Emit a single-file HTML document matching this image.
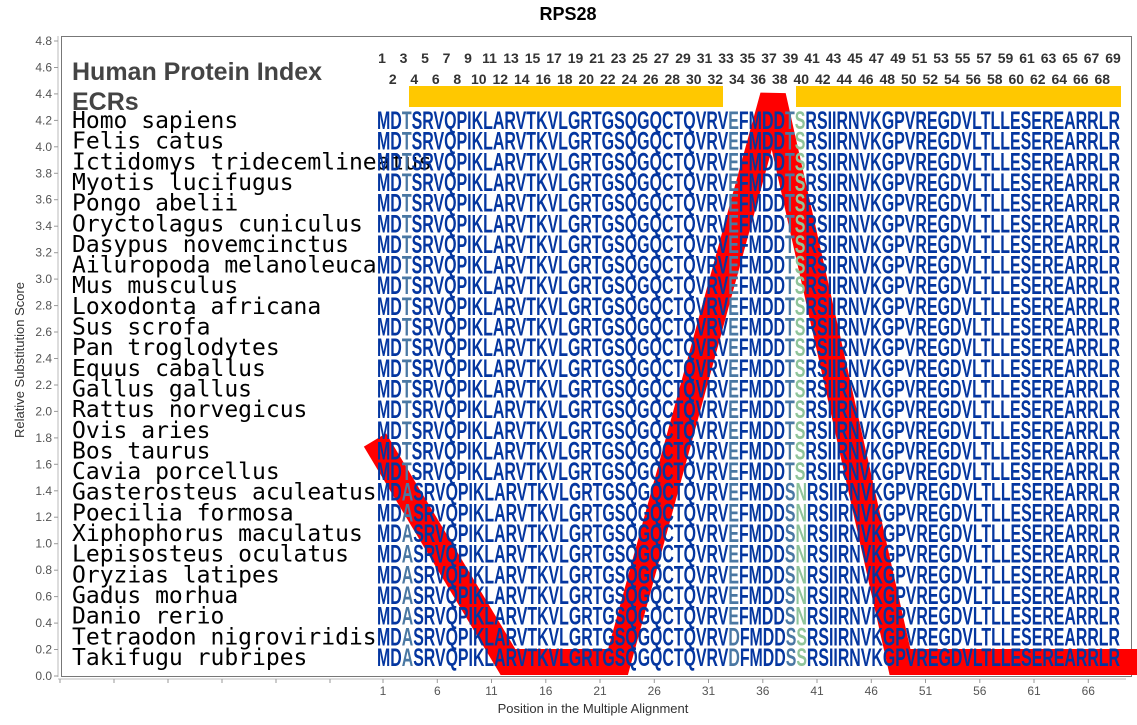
<!DOCTYPE html>
<html><head><meta charset="utf-8"><style>
html,body{margin:0;padding:0;background:#fff;width:1137px;height:725px;overflow:hidden}
svg{display:block}
.sp{font-family:"DejaVu Sans Mono","Liberation Mono",monospace;font-size:23px;fill:#000}
.sq{font-family:"Liberation Sans",sans-serif;font-size:25px;font-weight:bold;fill:#0436a0}
.s{fill:#4a78a3}.g{fill:#8fc49a}
.hn{font-family:"Liberation Sans",sans-serif;font-size:14px;font-weight:bold;fill:#333;text-anchor:middle}
.yl{font-family:"Liberation Sans","DejaVu Sans",sans-serif;font-size:12px;fill:#555;text-anchor:end}
.xl{font-family:"Liberation Sans","DejaVu Sans",sans-serif;font-size:12px;fill:#555;text-anchor:middle}
</style></head><body>
<svg width="1137" height="725" viewBox="0 0 1137 725" xmlns="http://www.w3.org/2000/svg">
<text x="568" y="20" text-anchor="middle" font-family="Liberation Sans,sans-serif" font-weight="bold" font-size="18" fill="#000">RPS28</text>
<text transform="translate(24,360) rotate(-90)" text-anchor="middle" font-family="Liberation Sans,sans-serif" font-size="13" fill="#333">Relative Substitution Score</text>
<text x="593" y="713" text-anchor="middle" font-family="Liberation Sans,sans-serif" font-size="13" fill="#333">Position in the Multiple Alignment</text>
<line x1="58" y1="36" x2="58" y2="677" stroke="#bbb"/>
<rect x="61.5" y="36.5" width="1070" height="640" fill="none" stroke="#777"/>
<line x1="58" y1="679" x2="1126" y2="679" stroke="#bbb"/>
<g stroke="#999">
<line x1="54" y1="41" x2="58" y2="41"/><line x1="54" y1="67.5" x2="58" y2="67.5"/><line x1="54" y1="93.9" x2="58" y2="93.9"/><line x1="54" y1="120.4" x2="58" y2="120.4"/><line x1="54" y1="146.8" x2="58" y2="146.8"/><line x1="54" y1="173.3" x2="58" y2="173.3"/><line x1="54" y1="199.7" x2="58" y2="199.7"/><line x1="54" y1="226.2" x2="58" y2="226.2"/><line x1="54" y1="252.7" x2="58" y2="252.7"/><line x1="54" y1="279.1" x2="58" y2="279.1"/><line x1="54" y1="305.6" x2="58" y2="305.6"/><line x1="54" y1="332" x2="58" y2="332"/><line x1="54" y1="358.5" x2="58" y2="358.5"/><line x1="54" y1="385" x2="58" y2="385"/><line x1="54" y1="411.4" x2="58" y2="411.4"/><line x1="54" y1="437.9" x2="58" y2="437.9"/><line x1="54" y1="464.3" x2="58" y2="464.3"/><line x1="54" y1="490.8" x2="58" y2="490.8"/><line x1="54" y1="517.2" x2="58" y2="517.2"/><line x1="54" y1="543.7" x2="58" y2="543.7"/><line x1="54" y1="570.2" x2="58" y2="570.2"/><line x1="54" y1="596.6" x2="58" y2="596.6"/><line x1="54" y1="623.1" x2="58" y2="623.1"/><line x1="54" y1="649.5" x2="58" y2="649.5"/><line x1="54" y1="676" x2="58" y2="676"/>
<line x1="60" y1="679" x2="60" y2="683"/><line x1="114" y1="679" x2="114" y2="683"/><line x1="168" y1="679" x2="168" y2="683"/><line x1="222" y1="679" x2="222" y2="683"/><line x1="276" y1="679" x2="276" y2="683"/><line x1="330" y1="679" x2="330" y2="683"/><line x1="383" y1="679" x2="383" y2="683"/><line x1="437.3" y1="679" x2="437.3" y2="683"/><line x1="491.5" y1="679" x2="491.5" y2="683"/><line x1="545.8" y1="679" x2="545.8" y2="683"/><line x1="600" y1="679" x2="600" y2="683"/><line x1="654.3" y1="679" x2="654.3" y2="683"/><line x1="708.5" y1="679" x2="708.5" y2="683"/><line x1="762.8" y1="679" x2="762.8" y2="683"/><line x1="817" y1="679" x2="817" y2="683"/><line x1="871.3" y1="679" x2="871.3" y2="683"/><line x1="925.5" y1="679" x2="925.5" y2="683"/><line x1="979.8" y1="679" x2="979.8" y2="683"/><line x1="1034" y1="679" x2="1034" y2="683"/><line x1="1088.3" y1="679" x2="1088.3" y2="683"/>
</g>
<g class="yl">
<text x="52" y="45">4.8</text><text x="52" y="71.5">4.6</text><text x="52" y="97.9">4.4</text><text x="52" y="124.4">4.2</text><text x="52" y="150.8">4.0</text><text x="52" y="177.3">3.8</text><text x="52" y="203.7">3.6</text><text x="52" y="230.2">3.4</text><text x="52" y="256.7">3.2</text><text x="52" y="283.1">3.0</text><text x="52" y="309.6">2.8</text><text x="52" y="336">2.6</text><text x="52" y="362.5">2.4</text><text x="52" y="389">2.2</text><text x="52" y="415.4">2.0</text><text x="52" y="441.9">1.8</text><text x="52" y="468.3">1.6</text><text x="52" y="494.8">1.4</text><text x="52" y="521.2">1.2</text><text x="52" y="547.7">1.0</text><text x="52" y="574.2">0.8</text><text x="52" y="600.6">0.6</text><text x="52" y="627.1">0.4</text><text x="52" y="653.5">0.2</text><text x="52" y="680">0.0</text>
</g>
<g class="xl">
<text x="383" y="695">1</text><text x="437.3" y="695">6</text><text x="491.5" y="695">11</text><text x="545.8" y="695">16</text><text x="600" y="695">21</text><text x="654.3" y="695">26</text><text x="708.5" y="695">31</text><text x="762.8" y="695">36</text><text x="817" y="695">41</text><text x="871.3" y="695">46</text><text x="925.5" y="695">51</text><text x="979.8" y="695">56</text><text x="1034" y="695">61</text><text x="1088.3" y="695">66</text>
</g>
<text x="72" y="80" font-family="Liberation Sans,sans-serif" font-weight="bold" font-size="25" fill="#444">Human Protein Index</text>
<text x="72" y="110" font-family="Liberation Sans,sans-serif" font-weight="bold" font-size="25" fill="#444">ECRs</text>
<g class="hn">
<text x="382" y="63">1</text><text x="403.5" y="63">3</text><text x="425" y="63">5</text><text x="446.5" y="63">7</text><text x="468" y="63">9</text><text x="489.5" y="63">11</text><text x="511" y="63">13</text><text x="532.5" y="63">15</text><text x="554" y="63">17</text><text x="575.5" y="63">19</text><text x="597" y="63">21</text><text x="618.5" y="63">23</text><text x="640" y="63">25</text><text x="661.5" y="63">27</text><text x="683" y="63">29</text><text x="704.5" y="63">31</text><text x="726" y="63">33</text><text x="747.5" y="63">35</text><text x="769" y="63">37</text><text x="790.5" y="63">39</text><text x="812" y="63">41</text><text x="833.5" y="63">43</text><text x="855" y="63">45</text><text x="876.5" y="63">47</text><text x="898" y="63">49</text><text x="919.5" y="63">51</text><text x="941" y="63">53</text><text x="962.5" y="63">55</text><text x="984" y="63">57</text><text x="1005.5" y="63">59</text><text x="1027" y="63">61</text><text x="1048.5" y="63">63</text><text x="1070" y="63">65</text><text x="1091.5" y="63">67</text><text x="1113" y="63">69</text>
<text x="392.75" y="84">2</text><text x="414.25" y="84">4</text><text x="435.75" y="84">6</text><text x="457.25" y="84">8</text><text x="478.75" y="84">10</text><text x="500.25" y="84">12</text><text x="521.75" y="84">14</text><text x="543.25" y="84">16</text><text x="564.75" y="84">18</text><text x="586.25" y="84">20</text><text x="607.75" y="84">22</text><text x="629.25" y="84">24</text><text x="650.75" y="84">26</text><text x="672.25" y="84">28</text><text x="693.75" y="84">30</text><text x="715.25" y="84">32</text><text x="736.75" y="84">34</text><text x="758.25" y="84">36</text><text x="779.75" y="84">38</text><text x="801.25" y="84">40</text><text x="822.75" y="84">42</text><text x="844.25" y="84">44</text><text x="865.75" y="84">46</text><text x="887.25" y="84">48</text><text x="908.75" y="84">50</text><text x="930.25" y="84">52</text><text x="951.75" y="84">54</text><text x="973.25" y="84">56</text><text x="994.75" y="84">58</text><text x="1016.25" y="84">60</text><text x="1037.75" y="84">62</text><text x="1059.25" y="84">64</text><text x="1080.75" y="84">66</text><text x="1102.25" y="84">68</text>
</g>
<rect x="409" y="86" width="314" height="21" fill="#ffc800"/>
<rect x="796" y="86" width="325" height="21" fill="#ffc800"/>
<polyline points="375,440 508,662 618,662 773,96 900,662 1140,662" fill="none" stroke="#ff0000" stroke-width="26" stroke-linejoin="miter" stroke-miterlimit="4" stroke-linecap="butt"/>
<g class="sp">
<text x="72" y="128">Homo sapiens</text>
<text x="72" y="148.7">Felis catus</text>
<text x="72" y="169.3">Ictidomys tridecemlineatus</text>
<text x="72" y="190">Myotis lucifugus</text>
<text x="72" y="210.6">Pongo abelii</text>
<text x="72" y="231.3">Oryctolagus cuniculus</text>
<text x="72" y="251.9">Dasypus novemcinctus</text>
<text x="72" y="272.6">Ailuropoda melanoleuca</text>
<text x="72" y="293.2">Mus musculus</text>
<text x="72" y="313.9">Loxodonta africana</text>
<text x="72" y="334.5">Sus scrofa</text>
<text x="72" y="355.2">Pan troglodytes</text>
<text x="72" y="375.8">Equus caballus</text>
<text x="72" y="396.5">Gallus gallus</text>
<text x="72" y="417.1">Rattus norvegicus</text>
<text x="72" y="437.8">Ovis aries</text>
<text x="72" y="458.4">Bos taurus</text>
<text x="72" y="479.1">Cavia porcellus</text>
<text x="72" y="499.7">Gasterosteus aculeatus</text>
<text x="72" y="520.4">Poecilia formosa</text>
<text x="72" y="541">Xiphophorus maculatus</text>
<text x="72" y="561.7">Lepisosteus oculatus</text>
<text x="72" y="582.3">Oryzias latipes</text>
<text x="72" y="603">Gadus morhua</text>
<text x="72" y="623.6">Danio rerio</text>
<text x="72" y="644.3">Tetraodon nigroviridis</text>
<text x="72" y="664.9">Takifugu rubripes</text>
</g>
<g class="sq">
<text x="377" y="129" textLength="743" lengthAdjust="spacingAndGlyphs">MD<tspan class="s">T</tspan>SRVQPIKLARVTKVLGRTGSQGQCTQVRV<tspan class="s">E</tspan>FMDD<tspan class="s">T</tspan><tspan class="g">S</tspan>RSIIRNVKGPVREGDVLTLLESEREARRLR</text>
<text x="377" y="149.65" textLength="743" lengthAdjust="spacingAndGlyphs">MD<tspan class="s">T</tspan>SRVQPIKLARVTKVLGRTGSQGQCTQVRV<tspan class="s">E</tspan>FMDD<tspan class="s">T</tspan><tspan class="g">S</tspan>RSIIRNVKGPVREGDVLTLLESEREARRLR</text>
<text x="377" y="170.3" textLength="743" lengthAdjust="spacingAndGlyphs">MD<tspan class="s">T</tspan>SRVQPIKLARVTKVLGRTGSQGQCTQVRV<tspan class="s">E</tspan>FMDD<tspan class="s">T</tspan><tspan class="g">S</tspan>RSIIRNVKGPVREGDVLTLLESEREARRLR</text>
<text x="377" y="190.95" textLength="743" lengthAdjust="spacingAndGlyphs">MD<tspan class="s">T</tspan>SRVQPIKLARVTKVLGRTGSQGQCTQVRV<tspan class="s">E</tspan>FMDD<tspan class="s">T</tspan><tspan class="g">S</tspan>RSIIRNVKGPVREGDVLTLLESEREARRLR</text>
<text x="377" y="211.6" textLength="743" lengthAdjust="spacingAndGlyphs">MD<tspan class="s">T</tspan>SRVQPIKLARVTKVLGRTGSQGQCTQVRV<tspan class="s">E</tspan>FMDD<tspan class="s">T</tspan><tspan class="g">S</tspan>RSIIRNVKGPVREGDVLTLLESEREARRLR</text>
<text x="377" y="232.25" textLength="743" lengthAdjust="spacingAndGlyphs">MD<tspan class="s">T</tspan>SRVQPIKLARVTKVLGRTGSQGQCTQVRV<tspan class="s">E</tspan>FMDD<tspan class="s">T</tspan><tspan class="g">S</tspan>RSIIRNVKGPVREGDVLTLLESEREARRLR</text>
<text x="377" y="252.9" textLength="743" lengthAdjust="spacingAndGlyphs">MD<tspan class="s">T</tspan>SRVQPIKLARVTKVLGRTGSQGQCTQVRV<tspan class="s">E</tspan>FMDD<tspan class="s">T</tspan><tspan class="g">S</tspan>RSIIRNVKGPVREGDVLTLLESEREARRLR</text>
<text x="377" y="273.55" textLength="743" lengthAdjust="spacingAndGlyphs">MD<tspan class="s">T</tspan>SRVQPIKLARVTKVLGRTGSQGQCTQVRV<tspan class="s">E</tspan>FMDD<tspan class="s">T</tspan><tspan class="g">S</tspan>RSIIRNVKGPVREGDVLTLLESEREARRLR</text>
<text x="377" y="294.2" textLength="743" lengthAdjust="spacingAndGlyphs">MD<tspan class="s">T</tspan>SRVQPIKLARVTKVLGRTGSQGQCTQVRV<tspan class="s">E</tspan>FMDD<tspan class="s">T</tspan><tspan class="g">S</tspan>RSIIRNVKGPVREGDVLTLLESEREARRLR</text>
<text x="377" y="314.85" textLength="743" lengthAdjust="spacingAndGlyphs">MD<tspan class="s">T</tspan>SRVQPIKLARVTKVLGRTGSQGQCTQVRV<tspan class="s">E</tspan>FMDD<tspan class="s">T</tspan><tspan class="g">S</tspan>RSIIRNVKGPVREGDVLTLLESEREARRLR</text>
<text x="377" y="335.5" textLength="743" lengthAdjust="spacingAndGlyphs">MD<tspan class="s">T</tspan>SRVQPIKLARVTKVLGRTGSQGQCTQVRV<tspan class="s">E</tspan>FMDD<tspan class="s">T</tspan><tspan class="g">S</tspan>RSIIRNVKGPVREGDVLTLLESEREARRLR</text>
<text x="377" y="356.15" textLength="743" lengthAdjust="spacingAndGlyphs">MD<tspan class="s">T</tspan>SRVQPIKLARVTKVLGRTGSQGQCTQVRV<tspan class="s">E</tspan>FMDD<tspan class="s">T</tspan><tspan class="g">S</tspan>RSIIRNVKGPVREGDVLTLLESEREARRLR</text>
<text x="377" y="376.8" textLength="743" lengthAdjust="spacingAndGlyphs">MD<tspan class="s">T</tspan>SRVQPIKLARVTKVLGRTGSQGQCTQVRV<tspan class="s">E</tspan>FMDD<tspan class="s">T</tspan><tspan class="g">S</tspan>RSIIRNVKGPVREGDVLTLLESEREARRLR</text>
<text x="377" y="397.45" textLength="743" lengthAdjust="spacingAndGlyphs">MD<tspan class="s">T</tspan>SRVQPIKLARVTKVLGRTGSQGQCTQVRV<tspan class="s">E</tspan>FMDD<tspan class="s">T</tspan><tspan class="g">S</tspan>RSIIRNVKGPVREGDVLTLLESEREARRLR</text>
<text x="377" y="418.1" textLength="743" lengthAdjust="spacingAndGlyphs">MD<tspan class="s">T</tspan>SRVQPIKLARVTKVLGRTGSQGQCTQVRV<tspan class="s">E</tspan>FMDD<tspan class="s">T</tspan><tspan class="g">S</tspan>RSIIRNVKGPVREGDVLTLLESEREARRLR</text>
<text x="377" y="438.75" textLength="743" lengthAdjust="spacingAndGlyphs">MD<tspan class="s">T</tspan>SRVQPIKLARVTKVLGRTGSQGQCTQVRV<tspan class="s">E</tspan>FMDD<tspan class="s">T</tspan><tspan class="g">S</tspan>RSIIRNVKGPVREGDVLTLLESEREARRLR</text>
<text x="377" y="459.4" textLength="743" lengthAdjust="spacingAndGlyphs">MD<tspan class="s">T</tspan>SRVQPIKLARVTKVLGRTGSQGQCTQVRV<tspan class="s">E</tspan>FMDD<tspan class="s">T</tspan><tspan class="g">S</tspan>RSIIRNVKGPVREGDVLTLLESEREARRLR</text>
<text x="377" y="480.05" textLength="743" lengthAdjust="spacingAndGlyphs">MD<tspan class="s">T</tspan>SRVQPIKLARVTKVLGRTGSQGQCTQVRV<tspan class="s">E</tspan>FMDD<tspan class="s">T</tspan><tspan class="g">S</tspan>RSIIRNVKGPVREGDVLTLLESEREARRLR</text>
<text x="377" y="500.7" textLength="743" lengthAdjust="spacingAndGlyphs">MD<tspan class="s">A</tspan>SRVQPIKLARVTKVLGRTGSQGQCTQVRV<tspan class="s">E</tspan>FMDD<tspan class="s">S</tspan><tspan class="g">N</tspan>RSIIRNVKGPVREGDVLTLLESEREARRLR</text>
<text x="377" y="521.35" textLength="743" lengthAdjust="spacingAndGlyphs">MD<tspan class="s">A</tspan>SRVQPIKLARVTKVLGRTGSQGQCTQVRV<tspan class="s">E</tspan>FMDD<tspan class="s">S</tspan><tspan class="g">N</tspan>RSIIRNVKGPVREGDVLTLLESEREARRLR</text>
<text x="377" y="542" textLength="743" lengthAdjust="spacingAndGlyphs">MD<tspan class="s">A</tspan>SRVQPIKLARVTKVLGRTGSQGQCTQVRV<tspan class="s">E</tspan>FMDD<tspan class="s">S</tspan><tspan class="g">N</tspan>RSIIRNVKGPVREGDVLTLLESEREARRLR</text>
<text x="377" y="562.65" textLength="743" lengthAdjust="spacingAndGlyphs">MD<tspan class="s">A</tspan>SRVQPIKLARVTKVLGRTGSQGQCTQVRV<tspan class="s">E</tspan>FMDD<tspan class="s">S</tspan><tspan class="g">N</tspan>RSIIRNVKGPVREGDVLTLLESEREARRLR</text>
<text x="377" y="583.3" textLength="743" lengthAdjust="spacingAndGlyphs">MD<tspan class="s">A</tspan>SRVQPIKLARVTKVLGRTGSQGQCTQVRV<tspan class="s">E</tspan>FMDD<tspan class="s">S</tspan><tspan class="g">N</tspan>RSIIRNVKGPVREGDVLTLLESEREARRLR</text>
<text x="377" y="603.95" textLength="743" lengthAdjust="spacingAndGlyphs">MD<tspan class="s">A</tspan>SRVQPIKLARVTKVLGRTGSQGQCTQVRV<tspan class="s">E</tspan>FMDD<tspan class="s">S</tspan><tspan class="g">N</tspan>RSIIRNVKGPVREGDVLTLLESEREARRLR</text>
<text x="377" y="624.6" textLength="743" lengthAdjust="spacingAndGlyphs">MD<tspan class="s">A</tspan>SRVQPIKLARVTKVLGRTGSQGQCTQVRV<tspan class="s">E</tspan>FMDD<tspan class="s">S</tspan><tspan class="g">N</tspan>RSIIRNVKGPVREGDVLTLLESEREARRLR</text>
<text x="377" y="645.25" textLength="743" lengthAdjust="spacingAndGlyphs">MD<tspan class="s">A</tspan>SRVQPIKLARVTKVLGRTGSQGQCTQVRV<tspan class="s">D</tspan>FMDD<tspan class="s">S</tspan><tspan class="g">S</tspan>RSIIRNVKGPVREGDVLTLLESEREARRLR</text>
<text x="377" y="665.9" textLength="743" lengthAdjust="spacingAndGlyphs">MD<tspan class="s">A</tspan>SRVQPIKLARVTKVLGRTGSQGQCTQVRV<tspan class="s">D</tspan>FMDD<tspan class="s">S</tspan><tspan class="g">S</tspan>RSIIRNVKGPVREGDVLTLLESEREARRLR</text>
</g>
</svg>
</body></html>
